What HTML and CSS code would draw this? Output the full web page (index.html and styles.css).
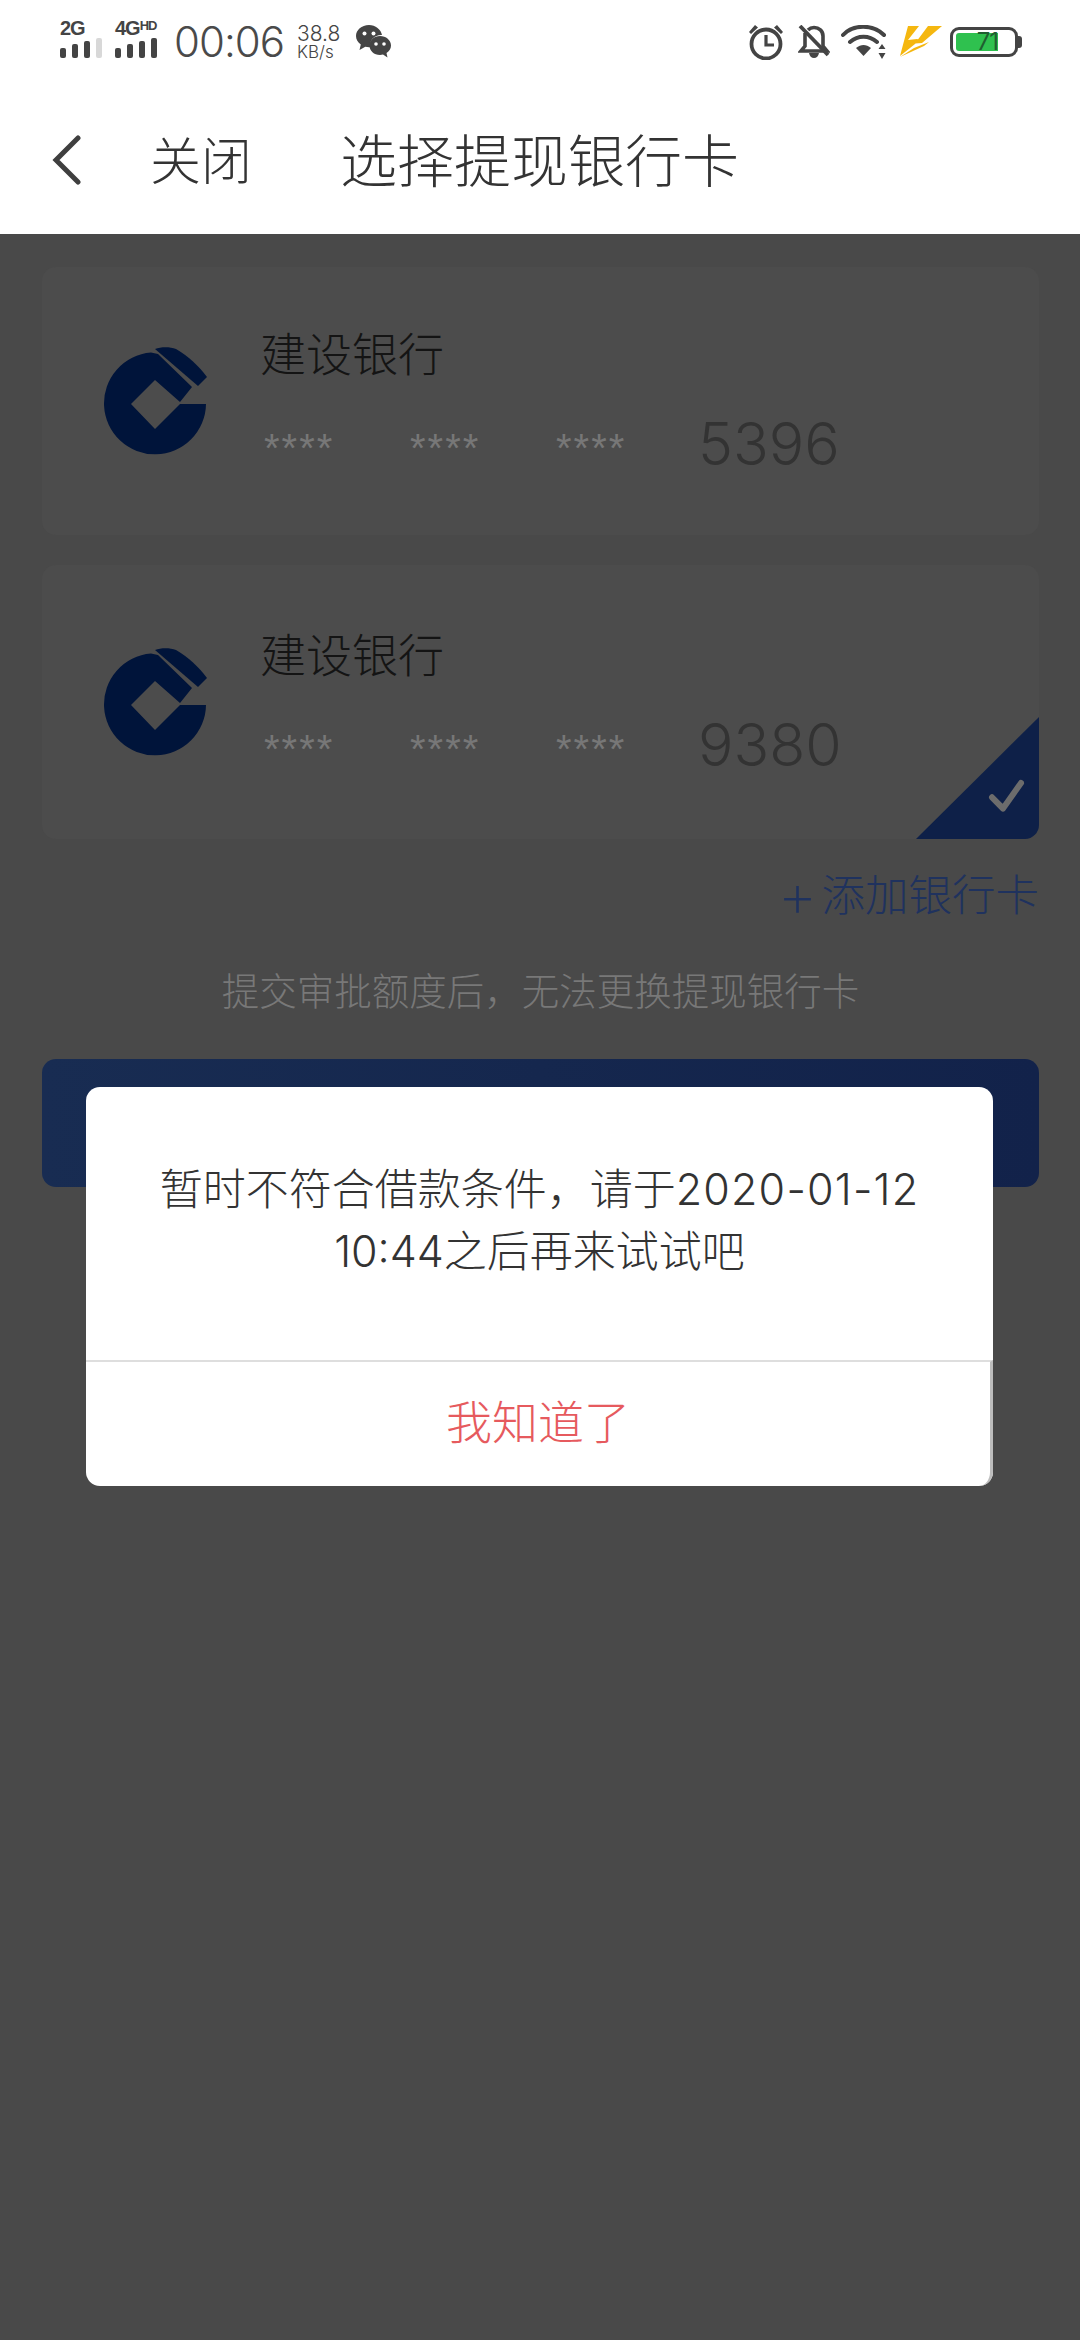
FILE: index.html
```html
<!DOCTYPE html>
<html lang="zh-CN">
<head>
<meta charset="utf-8">
<title>选择提现银行卡</title>
<link rel="stylesheet" href="styles.css">
</head>
<body>
<div class="app">
  <header class="top">
    <div class="status">
      <div class="status-left">
        <div class="sig sig-a">
          <span class="sig-label">2G</span>
          <div class="bars"><i></i><i></i><i></i><i class="off"></i></div>
        </div>
        <div class="sig sig-b">
          <span class="sig-label">4G<sup>HD</sup></span>
          <div class="bars"><i></i><i></i><i></i><i></i></div>
        </div>
        <span class="clock">00:06</span>
        <div class="speed"><span class="speed-n">38.8</span><span class="speed-u">KB/s</span></div>
        <svg class="ic-wechat" viewBox="0 0 36 36" aria-hidden="true">
          <path fill="#444" d="M14 1C6.500 1 1 6 1 12c0 3.600 1.900 6.400 4.800 8.500L4.500 26l5.800-3.300c1.200.3 2.400.5 3.700.5h1.200C14 16 20 10.500 27 11 26 5.500 20.500 1 14 1z"/>
          <circle cx="9.500" cy="9.500" r="2" fill="#fff"/><circle cx="18.500" cy="9.500" r="2" fill="#fff"/>
          <path fill="#444" d="M25 12c-6 0-10.500 4.200-10.500 9.500S19 31 25 31c1.100 0 2-.1 3-.4l4.500 3-1-4.600c2.800-1.800 4.500-4.500 4.500-7.500 0-5.300-5-9.500-11-9.500z"/>
          <circle cx="21" cy="20" r="1.800" fill="#fff"/><circle cx="29" cy="20" r="1.800" fill="#fff"/>
        </svg>
      </div>
      <div class="status-right">
        <svg class="ic-alarm" viewBox="0 0 36 36" aria-hidden="true">
          <circle cx="18" cy="20" r="14.500" fill="none" stroke="#444" stroke-width="3.800"/>
          <path fill="none" stroke="#444" stroke-width="3.200" d="M18 11v10h8"/>
          <path fill="#444" d="M1 8 7 1l3 2.500L3 10zM35 8l-6-7-3 2.500L33 10z"/>
        </svg>
        <svg class="ic-bell" viewBox="0 0 32 34" aria-hidden="true">
          <path fill="none" stroke="#444" stroke-width="3.600" d="M7 8v13L3 26h26l-4-5V11C25 6 21 2.500 16 2.500c-2.500 0-4.500 1-6 2.500"/>
          <path fill="#444" d="M11 28h10c-.5 3-2.500 5-5 5s-4.500-2-5-5z"/>
          <path stroke="#444" stroke-width="3.800" d="M2 1l28 29"/>
        </svg>
        <svg class="ic-wifi" viewBox="0 0 46 34" aria-hidden="true">
          <path fill="none" stroke="#444" stroke-width="4" stroke-linecap="round" d="M2 10C12-1 32-1 43 10M9 17c8-7 19-7 27 0"/>
          <path fill="#444" d="M15 23c5-4 10-4 15 0l-7.500 8z"/>
          <path fill="#444" d="M41 19l3.500 5h-7zM41 34l3.500-6h-7z"/>
        </svg>
        <svg class="ic-bolt" viewBox="0 0 44 34" aria-hidden="true">
          <path fill="#f5b70f" d="M9 1h11L9 15l9-1 3 1L1 31zM29 1h14L23 18l-7 .5z"/>
          <path fill="#f5b70f" d="M1 32l14-9 15-6L25 21z"/>
        </svg>
        <div class="battery">
          <div class="battery-body"><div class="battery-fill">71</div></div>
          <div class="battery-cap"></div>
        </div>
      </div>
    </div>
    <nav class="nav">
      <svg class="ic-back" viewBox="0 0 30 50" aria-hidden="true">
        <path fill="none" stroke="#3f3f3f" stroke-width="5" stroke-linecap="round" d="M26 3 4 25l22 22"/>
      </svg>
      <span class="nav-close">关闭</span>
      <span class="nav-title">选择提现银行卡</span>
    </nav>
  </header>

  <main class="content">
    <section class="card">
      <svg class="logo" viewBox="0 0 104 108" aria-hidden="true">
        <path fill="#00143a" d="M102 57A51 51 0 1 1 47 5.500L54 7 88 40 76 55 51 33 27 57 51 82 76 57z"/>
        <path fill="#00143a" d="M51 2C57-.5 66-.5 72 2 84 9 95 19 103 30L94 39z"/>
      </svg>
      <div class="card-info">
        <div class="bank">建设银行</div>
        <div class="num"><span class="stars">****</span><span class="stars">****</span><span class="stars">****</span><span class="last">5396</span></div>
      </div>
    </section>
    <section class="card card-b">
      <svg class="logo" viewBox="0 0 104 108" aria-hidden="true">
        <path fill="#00143a" d="M102 57A51 51 0 1 1 47 5.500L54 7 88 40 76 55 51 33 27 57 51 82 76 57z"/>
        <path fill="#00143a" d="M51 2C57-.5 66-.5 72 2 84 9 95 19 103 30L94 39z"/>
      </svg>
      <div class="card-info">
        <div class="bank">建设银行</div>
        <div class="num"><span class="stars">****</span><span class="stars">****</span><span class="stars">****</span><span class="last">9380</span></div>
      </div>
      <svg class="tick" viewBox="0 0 123 120" preserveAspectRatio="none" aria-hidden="true">
        <path fill="#0e2048" d="M123 0V106a14 14 0 0 1-14 14H0z"/>
        <path fill="none" stroke="#6c6c6c" stroke-width="6" stroke-linecap="round" stroke-linejoin="round" d="M76 79l11 11 18-25"/>
      </svg>
    </section>
    <div class="add"><span class="add-plus">+</span>添加银行卡</div>
    <p class="hint">提交审批额度后，无法更换提现银行卡</p>
    <div class="cta"></div>
  </main>

  <div class="modal">
    <div class="modal-body">暂时不符合借款条件，请于<span class="date">2020-01-12</span><br>10:44之后再来试试吧</div>
    <div class="modal-action">我知道了</div>
  </div>
</div>
</body>
</html>
```

FILE: styles.css
```css
* { box-sizing: border-box; }
html, body { margin: 0; padding: 0; }
body {
  width: 1080px;
  height: 2340px;
  overflow: hidden;
  background: #494949;
  font-family: Inter, "Noto Sans CJK SC", sans-serif;
  font-weight: 300;
}
.app { position: relative; width: 1080px; height: 2340px; }

.top { background: #fff; height: 234px; }
.status {
  height: 86px;
  padding: 0 58px 2px 60px;
  display: flex;
  justify-content: space-between;
  align-items: center;
}
.status-left, .status-right { display: flex; align-items: center; }

.sig { display: flex; flex-direction: column; width: 46px; height: 38px; margin-top: -6px; }
.sig-b { margin-left: 9px; width: 46px; }
.sig-label {
  font: 700 20px/17px "Liberation Sans", sans-serif;
  color: #444;
  letter-spacing: -1px;
  white-space: nowrap;
}
.sig-label sup { font-size: 13px; line-height: 0; vertical-align: 5px; }
.bars { display: flex; align-items: flex-end; gap: 6px; height: 21px; }
.bars i { display: block; width: 6px; background: #444; border-radius: 2px; }
.bars i:nth-child(1) { height: 10px; }
.bars i:nth-child(2) { height: 14px; }
.bars i:nth-child(3) { height: 17px; }
.bars i:nth-child(4) { height: 20px; }
.bars i.off { background: #d8d8d8; }

.clock {
  margin-left: 13px;
  font: 300 42px/48px Inter, sans-serif;
  letter-spacing: -1px;
  color: #4a4a4a;
}
.speed {
  margin-left: 13px;
  display: flex;
  flex-direction: column;
  font-family: Inter, sans-serif;
  font-weight: 300;
  color: #444;
}
.speed-n { font-size: 21px; line-height: 21px; }
.speed-u { font-size: 17px; line-height: 17px; }
.ic-wechat { width: 36px; height: 36px; margin-left: 15px; }

.ic-alarm { width: 36px; height: 36px; }
.ic-bell { width: 32px; height: 34px; margin-left: 14px; }
.ic-wifi { width: 46px; height: 34px; margin-left: 11px; }
.ic-bolt { width: 44px; height: 34px; margin-left: 12px; }

.battery { display: flex; align-items: center; margin-left: 7px; }
.battery-body {
  width: 68px;
  height: 30px;
  border: 3px solid #444;
  border-radius: 9px;
  padding: 3px;
}
.battery-fill {
  width: 42px;
  height: 18px;
  background: #2fc14f;
  border-radius: 3px 0 0 3px;
  font: 400 24px/18px Inter, sans-serif;
  letter-spacing: -1px;
  color: #1f5f30;
  text-align: right;
}
.battery-cap { width: 4px; height: 12px; background: #444; border-radius: 0 3px 3px 0; }

.nav { height: 148px; display: flex; align-items: center; padding: 0 0 0 52px; color: #333; }
.ic-back { width: 30px; height: 50px; }
.nav-close { margin-left: 68px; font-size: 51px; line-height: 60px; padding-top: 4px; }
.nav-title { margin-left: 88px; font-size: 57px; line-height: 66px; padding-top: 4px; }

.content { padding: 33px 41px 0 42px; display: flex; flex-direction: column; }
.card {
  position: relative;
  height: 268px;
  background: #4c4c4c;
  border-radius: 14px;
  display: flex;
  align-items: center;
  padding-left: 62px;
}
.card-b { margin-top: 30px; height: 274px; }
.logo { width: 104px; height: 108px; flex: none; }
.card-info { margin-left: 52px; margin-top: -2px; }
.bank { font-size: 46px; line-height: 58px; color: #141414; }
.num { display: flex; align-items: center; margin-top: 30px; height: 62px; }
.stars {
  width: 146px;
  padding: 8px 0 0 4px;
  font: 400 40px/40px "Liberation Sans", sans-serif;
  letter-spacing: 2px;
  color: #777;
}
.last { font-size: 59px; line-height: 62px; color: #333; margin-left: 0; }
.tick { position: absolute; right: 0; bottom: 0; width: 123px; height: 122px; }

.add {
  margin-top: 26px;
  font-size: 43.500px;
  line-height: 60px;
  color: #1f325e;
  display: flex;
  justify-content: flex-end;
  align-items: center;
}
.add-plus { font-size: 62px; margin-right: 4px; font-weight: 200; line-height: 60px; }
.hint {
  margin: 42px 0 0;
  text-align: center;
  font-size: 37.500px;
  line-height: 50px;
  color: #787878;
}
.cta {
  margin-top: 42px;
  height: 128px;
  border-radius: 14px;
  background: linear-gradient(90deg, #182c52, #12224a);
}

.modal {
  position: absolute;
  left: 86px;
  top: 1087px;
  width: 907px;
  height: 399px;
  background: #fff;
  border-radius: 14px;
  display: flex;
  flex-direction: column;
}
.modal-body {
  height: 273px;
  padding-top: 71px;
  text-align: center;
  font-size: 43px;
  line-height: 62px;
  color: #333;
}
.date { letter-spacing: 1.200px; }
.modal-action {
  flex: 1;
  border-top: 2px solid #dedede;
  border-right: 3px solid #bdbdbd;
  border-bottom-right-radius: 14px;
  display: flex;
  align-items: center;
  justify-content: center;
  padding-bottom: 10px;
  font-size: 46px;
  color: #e65a5e;
}
```
